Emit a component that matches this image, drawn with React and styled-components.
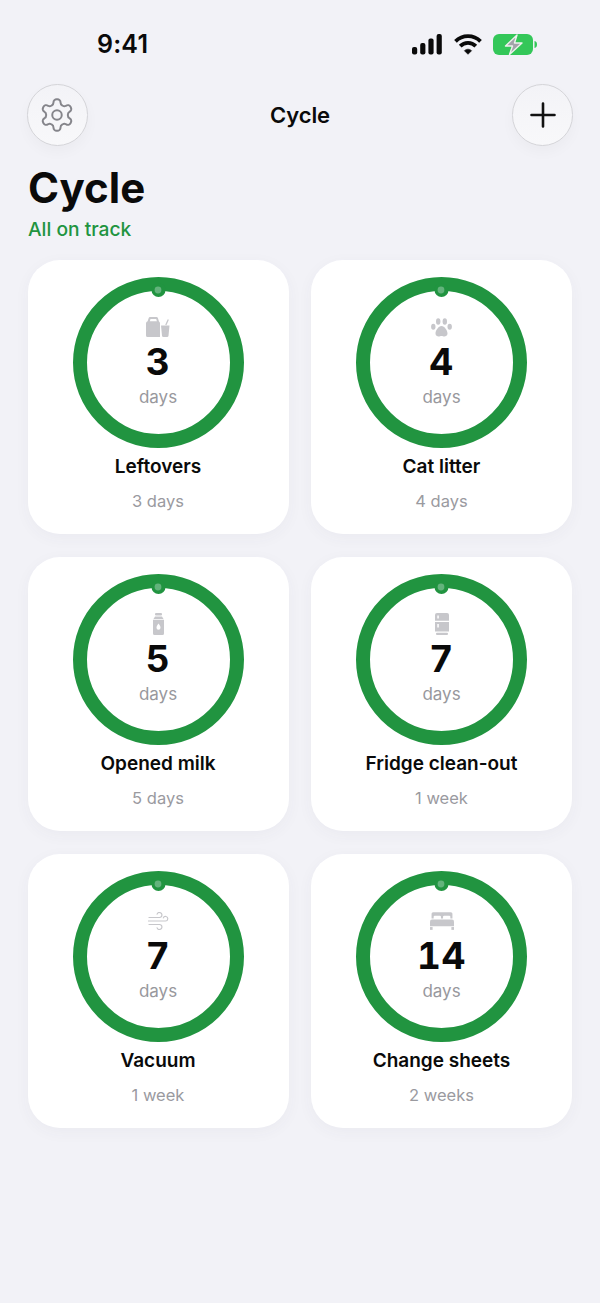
import React from "react";
import styled, { createGlobalStyle } from "styled-components";

const Global = createGlobalStyle`
  html, body { margin: 0; padding: 0; background: #f2f2f7; }
  body { font-family: Inter, "Liberation Sans", sans-serif; -webkit-font-smoothing: antialiased; }
`;

const Page = styled.div`
  width: 600px; height: 1303px; overflow: hidden; background: #f2f2f7; box-sizing: border-box;
  display: flex; flex-direction: column;
`;
const StatusBar = styled.div`
  height: 84px; box-sizing: border-box; padding: 29px 63px 0 97px;
  display: flex; justify-content: space-between; align-items: flex-start;
`;
const Time = styled.div`
  font-size: 25px; line-height: 30px; font-weight: 600; color: #0a0a0a; letter-spacing: 0.2px;
`;
const StatusIcons = styled.div`display: flex; align-items: center; gap: 11.500px; height: 30px;`;
const NavBar = styled.div`
  height: 62px; padding: 0 26.500px; display: flex; align-items: center; justify-content: space-between;
`;
const RoundButton = styled.div`
  width: 61.500px; height: 61.500px; box-sizing: border-box; border-radius: 50%;
  background: linear-gradient(180deg, #f3f3f7 0%, #f8f8fa 100%);
  border: 1px solid #d4d4d8; box-shadow: 0 6px 14px rgba(0,0,0,0.03);
  display: flex; align-items: center; justify-content: center;
`;
const NavTitle = styled.div`font-size: 22px; font-weight: 600; color: #0a0a0a; letter-spacing: -0.1px;`;
const Heading = styled.div`padding: 17px 28px 0; display: flex; flex-direction: column;`;
const Title = styled.h1`
  margin: 0; font-size: 42px; line-height: 50px; font-weight: 700; color: #0a0a0a; letter-spacing: 0.1px;
`;
const Subtitle = styled.div`
  font-size: 19.200px; line-height: 24px; font-weight: 500; color: #21943f; margin-top: 4px;
`;
const Grid = styled.div`
  margin-top: 19px; padding: 0 27.500px;
  display: grid; grid-template-columns: 261px 261px; column-gap: 22.500px; row-gap: 23px;
`;
const Card = styled.div`
  height: 274px; box-sizing: border-box; background: #fff; border-radius: 32px; padding-top: 17px;
  box-shadow: 0 4px 16px rgba(60,60,90,0.045);
  display: flex; flex-direction: column; align-items: center;
`;
const RingWrap = styled.div`position: relative; width: 171px; height: 171px; flex: none;`;
const RingSvg = styled.svg`position: absolute; inset: 0; display: block;`;
const RingContent = styled.div`
  position: absolute; inset: 0; display: flex; flex-direction: column; align-items: center;
  padding-top: 38px; box-sizing: border-box;
`;
const IconSlot = styled.div`height: 24px; width: 30px; display: flex; align-items: center; justify-content: center;`;
const Count = styled.div`
  font-size: 37px; line-height: 44px; font-weight: 700; color: #0a0a0a; margin-top: 1px;
  font-variant-numeric: tabular-nums; letter-spacing: 0.5px;
`;
const Unit = styled.div`font-size: 17px; line-height: 22px; color: #98989d; margin-top: 2px;`;
const Name = styled.div`
  font-size: 19px; line-height: 24px; font-weight: 600; color: #0a0a0a; margin-top: 7px;
`;
const Period = styled.div`font-size: 16.500px; line-height: 22px; color: #9a9a9f; margin-top: 11px;`;

const GREY = "#c7c7cb";

const Gear = () => (
  <svg width="38" height="38" viewBox="0 0 24 24" fill="none" stroke="#85858b" strokeWidth="1.250" strokeLinecap="round" strokeLinejoin="round">
    <path d="M12.220 2h-.44a2 2 0 0 0-2 2v.18a2 2 0 0 1-1 1.730l-.43.25a2 2 0 0 1-2 0l-.15-.08a2 2 0 0 0-2.730.73l-.22.38a2 2 0 0 0 .73 2.730l.15.1a2 2 0 0 1 1 1.720v.51a2 2 0 0 1-1 1.740l-.15.09a2 2 0 0 0-.73 2.730l.22.38a2 2 0 0 0 2.730.73l.15-.08a2 2 0 0 1 2 0l.43.25a2 2 0 0 1 1 1.730V20a2 2 0 0 0 2 2h.44a2 2 0 0 0 2-2v-.18a2 2 0 0 1 1-1.730l.43-.25a2 2 0 0 1 2 0l.15.08a2 2 0 0 0 2.730-.73l.22-.39a2 2 0 0 0-.73-2.730l-.15-.08a2 2 0 0 1-1-1.740v-.5a2 2 0 0 1 1-1.740l.15-.09a2 2 0 0 0 .73-2.730l-.22-.38a2 2 0 0 0-2.730-.73l-.15.08a2 2 0 0 1-2 0l-.43-.25a2 2 0 0 1-1-1.730V4a2 2 0 0 0-2-2z" />
    <circle cx="12" cy="12" r="3" />
  </svg>
);
const Plus = () => (
  <svg width="26" height="26" viewBox="0 0 26 26" stroke="#111" strokeWidth="2.600" strokeLinecap="round">
    <path d="M13 1.500v23M1.500 13h23" />
  </svg>
);
const Signal = () => (
  <svg width="30" height="21" viewBox="0 0 30 21" fill="#0a0a0a">
    <rect x="0" y="13" width="5.200" height="7.500" rx="2" />
    <rect x="8.200" y="9" width="5.200" height="11.500" rx="2" />
    <rect x="16.400" y="4.500" width="5.200" height="16" rx="2" />
    <rect x="24.600" y="0" width="5.200" height="20.500" rx="2" />
  </svg>
);
const Wifi = () => (
  <svg width="28" height="21" viewBox="0 0 28 21" fill="none" stroke="#0a0a0a" strokeWidth="3.800" strokeLinecap="butt">
    <path d="M1.500 7.300a17.800 17.800 0 0 1 25 0" />
    <path d="M6.200 12.200a11 11 0 0 1 15.600 0" />
    <path d="M14 20.300 10.400 16.700a5 5 0 0 1 7.200 0z" fill="#0a0a0a" strokeWidth="0.600" />
  </svg>
);
const Battery = () => (
  <svg width="44" height="21" viewBox="0 0 44 21">
    <rect x="0" y="0" width="40" height="21" rx="6" fill="#34c759" />
    <path d="M41.500 7c2 .3 2.500 1.800 2.500 3.500s-.5 3.200-2.500 3.500z" fill="#34c759" />
    <path d="M24 1 12.500 12h7l-3 8.500L29 9h-7.500z" fill="#a3a3aa" stroke="#eef2ee" strokeWidth="1.400" strokeLinejoin="round" />
  </svg>
);

const Takeout = () => (
  <svg width="24" height="20" viewBox="0 0 24 20" fill={GREY}>
    <path fillRule="evenodd" d="M4 0h6.500a1.500 1.500 0 0 1 1.400 1l1.100 3.500a2 2 0 0 1 1 1.700V20H1.500A1.500 1.500 0 0 1 0 18.500V6.200a2 2 0 0 1 1.600-1.900L2.700 1A1.500 1.500 0 0 1 4 0zM4.500 2 3.800 4.300h7.100L10.200 2z" />
    <path d="M15 8.500h8.500l-1 10.200a1.500 1.500 0 0 1-1.500 1.300h-3.500a1.500 1.500 0 0 1-1.500-1.300z" />
    <path d="M19.800 8 22.300 2.500" stroke={GREY} strokeWidth="1.300" fill="none" />
  </svg>
);
const Paw = () => (
  <svg width="21" height="19" viewBox="0 0 21 19" fill={GREY}>
    <ellipse cx="7.200" cy="3.500" rx="2.200" ry="3.300" />
    <ellipse cx="13.800" cy="3.500" rx="2.200" ry="3.300" />
    <ellipse cx="2.300" cy="8.700" rx="2.200" ry="3" />
    <ellipse cx="18.700" cy="8.700" rx="2.200" ry="3" />
    <path d="M10.500 8c3 0 6 4.500 6 7.500 0 2.200-1.800 3-3 3-1.200 0-2-.6-3-.6s-1.800.6-3 .6c-1.200 0-3-.8-3-3 0-3 3-7.500 6-7.500z" />
  </svg>
);
const Bottle = () => (
  <svg width="11" height="22" viewBox="0 0 11 22" fill={GREY}>
    <rect x="2" y="0" width="7" height="2.400" rx="1" />
    <path d="M2 3.400h7l1.500 2.500H.5z" />
    <path fillRule="evenodd" d="M0 6.800h11v13.700a1.500 1.500 0 0 1-1.500 1.500h-8A1.500 1.500 0 0 1 0 20.500zM5.500 10.500c-1 1.300-2 2.700-2 4.200a2 2 0 0 0 4 0c0-1.500-1-2.900-2-4.200z" />
  </svg>
);
const Fridge = () => (
  <svg width="14" height="22" viewBox="0 0 14 22" fill={GREY}>
    <path d="M2 0h10a2 2 0 0 1 2 2v5.800H0V2a2 2 0 0 1 2-2z" />
    <path d="M0 9h14v9.500H0z" />
    <rect x="1" y="19.700" width="12" height="2.300" rx="1" />
    <rect x="2.300" y="2.500" width="1.500" height="3" fill="#fff" />
    <rect x="2.300" y="11" width="1.500" height="3.500" fill="#fff" />
  </svg>
);
const Wind = () => (
  <svg width="21" height="18" viewBox="0 0 21 18" fill="none" stroke={GREY} strokeWidth="1.200" strokeLinecap="round">
    <path d="M1 5.500h10.500a2.500 2.500 0 1 0-2.400-3.400" />
    <path d="M0.500 9h17a2.300 2.300 0 1 0-2.200-3.100" />
    <path d="M1 12.500h10.500a2.500 2.500 0 1 1-2.400 3.400" />
  </svg>
);
const Bed = () => (
  <svg width="24" height="18" viewBox="0 0 23 17" fill={GREY}>
    <path d="M3 0h17a1.500 1.500 0 0 1 1.500 1.500V6H19.500V4.500a1 1 0 0 0-1-1h-5a1 1 0 0 0-1 1V6h-2V4.500a1 1 0 0 0-1-1h-5a1 1 0 0 0-1 1V6H1.500V1.500A1.500 1.500 0 0 1 3 0z" />
    <path d="M2 7h19a2 2 0 0 1 2 2v4.500H0V9a2 2 0 0 1 2-2z" />
    <rect x="0" y="14.300" width="2.500" height="2.700" />
    <rect x="20.500" y="14.300" width="2.500" height="2.700" />
  </svg>
);

const Ring = () => (
  <RingSvg width="171" height="171" viewBox="0 0 171 171">
    <circle cx="85.500" cy="85.500" r="78.500" fill="none" stroke="#219440" strokeWidth="14" />
    <circle cx="85.500" cy="13" r="7" fill="#219440" />
    <circle cx="85" cy="13" r="3.400" fill="#63b37c" />
  </RingSvg>
);

const items = [
  { icon: Takeout, n: 3, name: "Leftovers", period: "3 days" },
  { icon: Paw, n: 4, name: "Cat litter", period: "4 days" },
  { icon: Bottle, n: 5, name: "Opened milk", period: "5 days" },
  { icon: Fridge, n: 7, name: "Fridge clean-out", period: "1 week" },
  { icon: Wind, n: 7, name: "Vacuum", period: "1 week" },
  { icon: Bed, n: 14, name: "Change sheets", period: "2 weeks" },
];

export default function App() {
  return (
    <Page>
      <Global />
      <StatusBar>
        <Time>9:41</Time>
        <StatusIcons><Signal /><Wifi /><Battery /></StatusIcons>
      </StatusBar>
      <NavBar>
        <RoundButton><Gear /></RoundButton>
        <NavTitle>Cycle</NavTitle>
        <RoundButton><Plus /></RoundButton>
      </NavBar>
      <Heading>
        <Title>Cycle</Title>
        <Subtitle>All on track</Subtitle>
      </Heading>
      <Grid>
        {items.map(({ icon: Icon, n, name, period }) => (
          <Card key={name}>
            <RingWrap>
              <Ring />
              <RingContent>
                <IconSlot><Icon /></IconSlot>
                <Count>{n}</Count>
                <Unit>days</Unit>
              </RingContent>
            </RingWrap>
            <Name>{name}</Name>
            <Period>{period}</Period>
          </Card>
        ))}
      </Grid>
    </Page>
  );
}
